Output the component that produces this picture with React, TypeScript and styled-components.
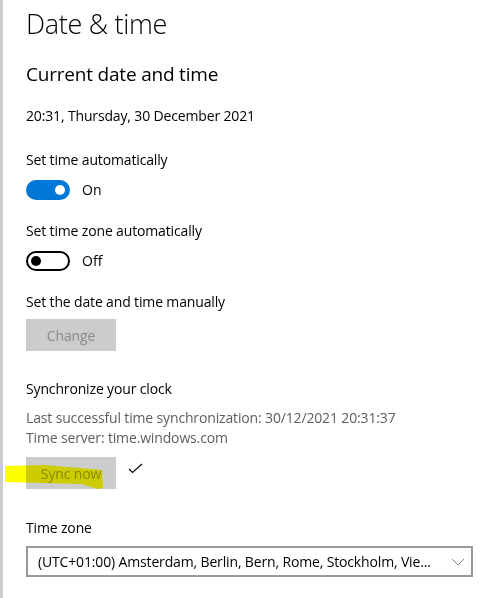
import styled, { createGlobalStyle } from "styled-components";

const GlobalStyle = createGlobalStyle`
  html, body {
    margin: 0;
    padding: 0;
    background: #ffffff;
  }
  body {
    font-family: "Open Sans", "Noto Sans", sans-serif;
    color: #000000;
  }
`;

const Page = styled.div`
  display: flex;
  min-height: 598px;
  width: 496px;
  box-sizing: border-box;
  border-left: 3px solid #cccccc;
`;

const Content = styled.main`
  display: flex;
  flex-direction: column;
  align-items: flex-start;
  padding: 5px 0 0 23px;
  flex: 1;
`;

const PageTitle = styled.h1`
  margin: 0;
  font-size: 27px;
  font-weight: 300;
  line-height: 38px;
  letter-spacing: -0.3px;
`;

const SectionTitle = styled.h2`
  margin: 18px 0 0;
  font-size: 19px;
  font-weight: 400;
  line-height: 26px;
  letter-spacing: -0.2px;
`;

const Text = styled.div<{ $muted?: boolean; $top?: number }>`
  margin-top: ${(p) => p.$top ?? 0}px;
  font-size: 14px;
  line-height: 20px;
  letter-spacing: -0.15px;
  color: ${(p) => (p.$muted ? "#5d5d5d" : "#000000")};
`;

const Row = styled.div<{ $top?: number }>`
  display: flex;
  align-items: center;
  gap: 12px;
  margin-top: ${(p) => p.$top ?? 0}px;
`;

const Track = styled.div<{ $on: boolean }>`
  box-sizing: border-box;
  width: 44px;
  height: 20px;
  border-radius: 10px;
  display: flex;
  align-items: center;
  justify-content: ${(p) => (p.$on ? "flex-end" : "flex-start")};
  padding: 0 3px;
  background: ${(p) => (p.$on ? "#0078d7" : "#ffffff")};
  border: 2px solid ${(p) => (p.$on ? "#0078d7" : "#000000")};
`;

const Knob = styled.span<{ $on: boolean }>`
  width: 10px;
  height: 10px;
  border-radius: 50%;
  background: ${(p) => (p.$on ? "#ffffff" : "#000000")};
`;

const ToggleLabel = styled.span`
  font-size: 14px;
  line-height: 20px;
`;

const Button = styled.button`
  box-sizing: border-box;
  width: 90px;
  height: 32px;
  border: none;
  background: #cccccc;
  color: #8a8a8a;
  font-family: inherit;
  font-size: 14px;
  letter-spacing: -0.15px;
  padding: 0;
  position: relative;
`;

const Highlight = styled.svg`
  position: absolute;
  left: -21px;
  top: 8px;
  pointer-events: none;
  mix-blend-mode: multiply;
`;

const Check = styled.svg`
  display: block;
  align-self: flex-start;
  margin-top: 6px;
`;

const Select = styled.div`
  box-sizing: border-box;
  width: 447px;
  height: 31px;
  margin-top: 8px;
  border: 2px solid #999999;
  display: flex;
  align-items: center;
  justify-content: space-between;
  padding: 0 6px 0 10px;
  font-size: 14px;
  letter-spacing: -0.15px;
`;

const Toggle = ({ on }: { on: boolean }) => (
  <Row $top={10}>
    <Track $on={on}>
      <Knob $on={on} />
    </Track>
    <ToggleLabel>{on ? "On" : "Off"}</ToggleLabel>
  </Row>
);

export default function App() {
  return (
    <>
      <GlobalStyle />
      <Page>
        <Content>
          <PageTitle>Date &amp; time</PageTitle>
          <SectionTitle>Current date and time</SectionTitle>
          <Text $top={19}>20:31, Thursday, 30 December 2021</Text>

          <Text $top={24}>Set time automatically</Text>
          <Toggle on />

          <Text $top={21}>Set time zone automatically</Text>
          <Toggle on={false} />

          <Text $top={21}>Set the date and time manually</Text>
          <Row $top={7}>
            <Button disabled>Change</Button>
          </Row>

          <Text $top={28}>Synchronize your clock</Text>
          <Text $muted $top={9}>
            Last successful time synchronization: 30/12/2021 20:31:37
          </Text>
          <Text $muted>Time server: time.windows.com</Text>
          <Row $top={9}>
            <Button disabled>
              Sync now
              <Highlight width="100" height="25" viewBox="0 0 100 25">
                <path
                  d="M0 1 L40 0 L97 5 L98 23 L93 24 L76 19 L0 17 Z"
                  fill="#ffff00"
                />
              </Highlight>
            </Button>
            <Check width="15" height="11" viewBox="0 0 15 11">
              <path d="M1 6 L4.5 9.5 L14 1" fill="none" stroke="#000" strokeWidth="1.1" />
            </Check>
          </Row>

          <Text $top={29}>Time zone</Text>
          <Select>
            <span>(UTC+01:00) Amsterdam, Berlin, Bern, Rome, Stockholm, Vie...</span>
            <svg width="14" height="8" viewBox="0 0 14 8">
              <path d="M1 1 L7 7 L13 1" fill="none" stroke="#888" strokeWidth="1" />
            </svg>
          </Select>
        </Content>
      </Page>
    </>
  );
}
